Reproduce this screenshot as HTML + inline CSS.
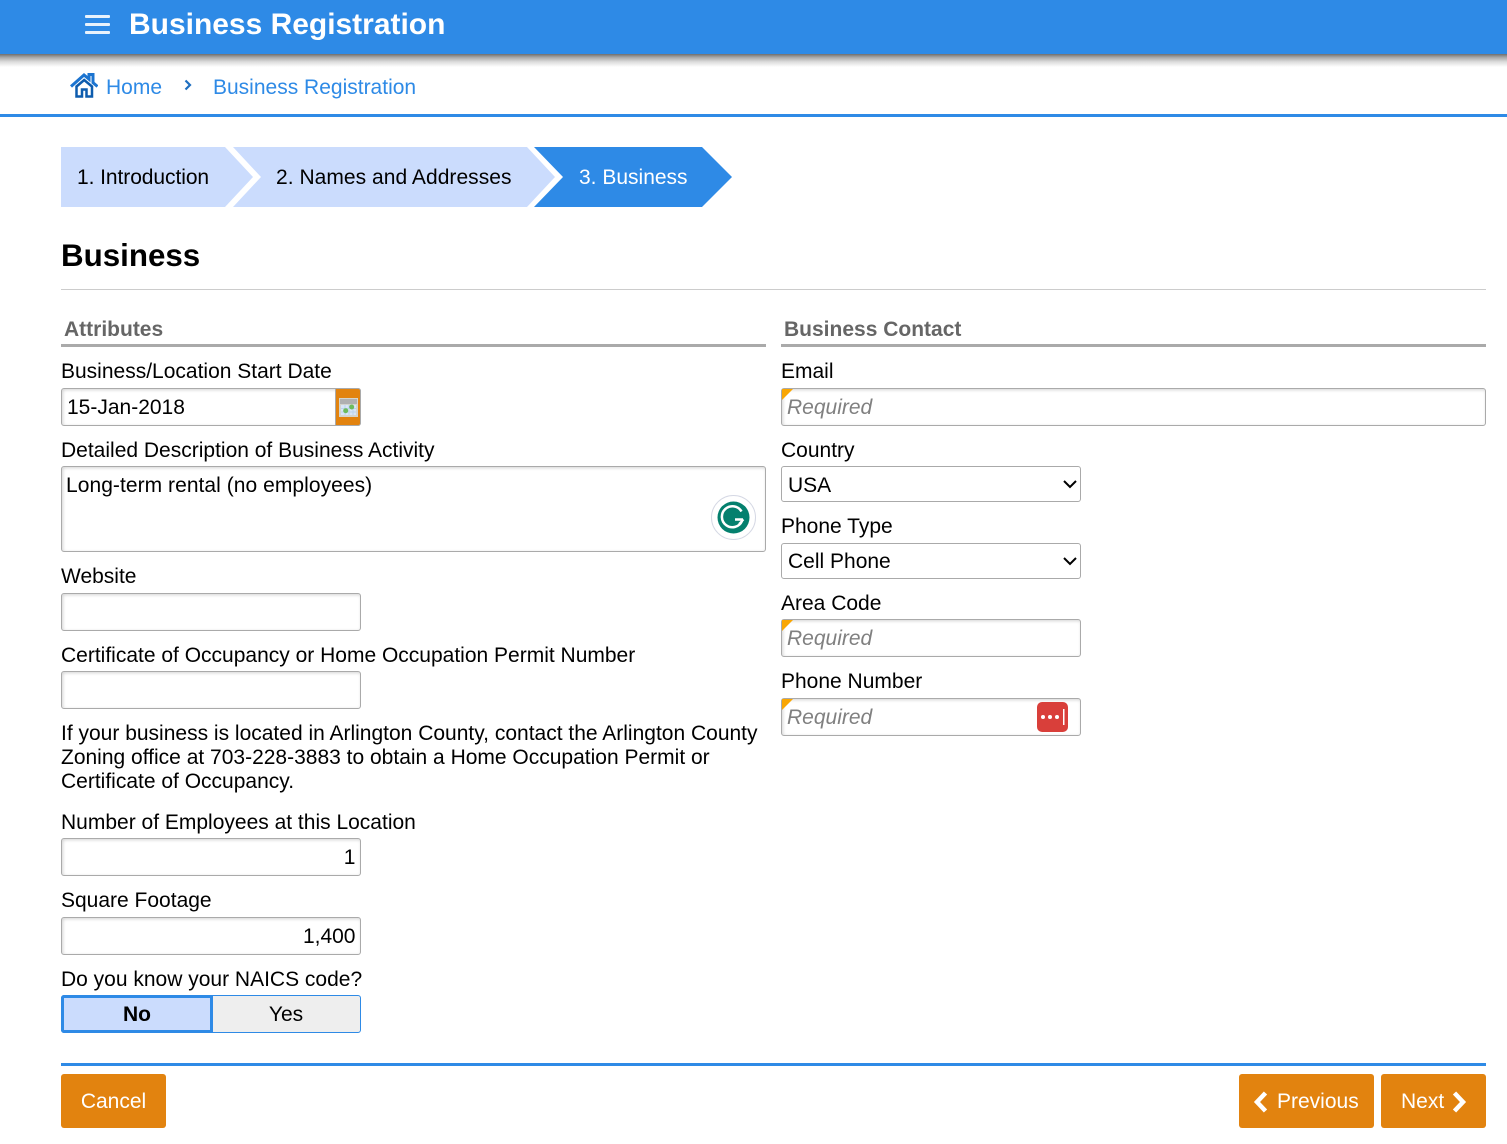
<!DOCTYPE html>
<html><head><meta charset="utf-8"><title>Business Registration</title>
<style>
html,body{margin:0;padding:0;background:#fff}
body{width:1507px;height:1144px;position:relative;overflow:hidden;font-family:"Liberation Sans",sans-serif;color:#000}
.t{position:absolute;white-space:nowrap;font-size:21px;line-height:24px;margin-top:1px}
.b{position:absolute;box-sizing:border-box;background:#fff;border:1px solid #aaa;border-radius:3px;box-shadow:inset 1px 1px 3px rgba(0,0,0,.18)}
.r:before{content:"";position:absolute;left:0;top:0;border-style:solid;border-width:11px 11px 0 0;border-color:#f9a602 transparent transparent transparent}
.ph{position:absolute;font-size:21px;line-height:24px;font-style:italic;color:#808080;left:5px;top:7px}
.sel{position:absolute;box-sizing:border-box;background:#fff;border:1px solid #aaa;border-radius:3px;width:300px;height:36px;font-size:21px;line-height:36px;padding-left:6px}
.sel svg{position:absolute;right:2px;top:12px}
.btn{position:absolute;background:#e2830f;border-radius:3px;color:#fff;font-size:21px;line-height:56px;height:54px;top:1074px}
.h{position:absolute;font-size:21px;line-height:24px;font-weight:bold;color:#666;white-space:nowrap;margin-top:1px}
.u{position:absolute;height:3px;background:#aaa;top:344px}
</style></head><body>

<div style="position:absolute;left:0;top:54px;width:1507px;height:13px;background:linear-gradient(#6e6e6e,#a6a6a6 25%,#dcdcdc 60%,#fff)"></div>
<div style="position:absolute;left:0;top:0;width:1507px;height:54px;background:#2e8ae6"></div>
<svg style="position:absolute;left:85px;top:14px" width="25" height="21"><g fill="#e8f2fc"><rect y="1" width="25" height="3" rx="1"/><rect y="9" width="25" height="3" rx="1"/><rect y="17" width="25" height="3" rx="1"/></g></svg>
<div class="t" style="left:129px;top:6px;font-size:29.980px;line-height:36px;font-weight:bold;color:#fff">Business Registration</div>

<svg style="position:absolute;left:70px;top:73px" width="28" height="25" viewBox="0 0 28 25"><path d="M1 13.500 14 2l5 4.200V1.500h4v8.200l4.500 3.800" fill="none" stroke="#1c74d0" stroke-width="3"/><path d="M6.500 13.500V23.500H12V16.500h4.500V23.500H22V13.500L14.200 7z" fill="#fff" stroke="#0d5cae" stroke-width="2.500"/></svg>
<div class="t" style="left:106px;top:75px;color:#2e8ae6">Home</div>
<svg style="position:absolute;left:184px;top:79px" width="8" height="12"><path d="M1.500 1.500 6 6l-4.500 4.500" fill="none" stroke="#1f6fc0" stroke-width="2.200"/></svg>
<div class="t" style="left:213px;top:75px;color:#2e8ae6">Business Registration</div>
<div style="position:absolute;left:0;top:114px;width:1507px;height:3px;background:#2e8ae6"></div>

<svg style="position:absolute;left:61px;top:147px" width="672" height="60">
<polygon points="0,0 164,0 192,30 164,60 0,60" fill="#cbdcfd"/>
<polygon points="172,0 466,0 494,30 466,60 172,60 200,30" fill="#cbdcfd"/>
<polygon points="473,0 641,0 671,30 641,60 473,60 502,30" fill="#2e8ae6"/>
</svg>
<div class="t" style="left:77px;top:165px;letter-spacing:-.07px">1. Introduction</div>
<div class="t" style="left:276px;top:165px;letter-spacing:.04px">2. Names and Addresses</div>
<div class="t" style="left:579px;top:165px;color:#fff">3. Business</div>

<div class="t" style="left:61px;top:237px;margin-top:0;font-size:31.300px;line-height:38px;font-weight:bold">Business</div>
<div style="position:absolute;left:61px;top:289px;width:1425px;height:1px;background:#ccc"></div>

<div class="h" style="left:64px;top:317px">Attributes</div>
<div class="u" style="left:61px;width:705px"></div>
<div class="h" style="left:784px;top:317px">Business Contact</div>
<div class="u" style="left:781px;width:705px"></div>

<div class="t" style="left:61px;top:359px">Business/Location Start Date</div>
<div class="b" style="left:61px;top:388px;width:300px;height:38px"></div>
<div class="t" style="left:67px;top:395px">15-Jan-2018</div>
<div style="position:absolute;left:335px;top:388px;width:26px;height:38px;box-sizing:border-box;background:#e2830f;border:1px solid #aaa;border-radius:0 3px 3px 0"></div>
<svg style="position:absolute;left:339px;top:398px" width="19" height="19"><rect width="19" height="19" fill="#d4d4ce"/><rect x="1" y="1" width="17" height="5" fill="#b0b0b0"/><rect x="2" y="7" width="15" height="10" fill="#d8e6f7"/><path d="M2 10.500h15M2 14h15M6 7v10M10 7v10M14 7v10" stroke="#bcd3ec" stroke-width="1"/><circle cx="6.700" cy="12.700" r="2.500" fill="#6dbb5c"/><circle cx="12.700" cy="9" r="2.500" fill="#6dbb5c"/></svg>

<div class="t" style="left:61px;top:438px">Detailed Description of Business Activity</div>
<div class="b" style="left:61px;top:466px;width:705px;height:86px"></div>
<div class="t" style="left:66px;top:473px;letter-spacing:.05px">Long-term rental (no employees)</div>
<svg style="position:absolute;left:711px;top:495px" width="45" height="45" viewBox="0 0 45 45"><circle cx="22.500" cy="22.500" r="22" fill="#fff" stroke="#d5d8e4"/><circle cx="22.500" cy="22.500" r="16" fill="#04806e"/><path d="M30.500 16.500A10.500 10.500 0 1 0 31 26" fill="none" stroke="#fff" stroke-width="2.500"/><path d="M24 24.500h8" fill="none" stroke="#fff" stroke-width="2.500"/><path d="M28 29l4.500-4.500" fill="none" stroke="#fff" stroke-width="2"/></svg>

<div class="t" style="left:61px;top:564px">Website</div>
<div class="b" style="left:61px;top:593px;width:300px;height:38px"></div>

<div class="t" style="left:61px;top:643px">Certificate of Occupancy or Home Occupation Permit Number</div>
<div class="b" style="left:61px;top:671px;width:300px;height:38px"></div>

<div class="t" style="left:61px;top:721px">If your business is located in Arlington County, contact the Arlington County</div>
<div class="t" style="left:61px;top:745px">Zoning office at 703-228-3883 to obtain a Home Occupation Permit or</div>
<div class="t" style="left:61px;top:769px">Certificate of Occupancy.</div>

<div class="t" style="left:61px;top:810px">Number of Employees at this Location</div>
<div class="b" style="left:61px;top:838px;width:300px;height:38px"></div>
<div class="t" style="right:1151.600px;top:845px">1</div>

<div class="t" style="left:61px;top:888px">Square Footage</div>
<div class="b" style="left:61px;top:917px;width:300px;height:38px"></div>
<div class="t" style="right:1151.500px;top:924px">1,400</div>

<div class="t" style="left:61px;top:967px">Do you know your NAICS code?</div>
<div style="position:absolute;left:61px;top:995px;width:300px;height:38px;box-sizing:border-box;border:1px solid #2e8ae6;border-radius:3px;background:#eee"></div>
<div style="position:absolute;left:61px;top:995px;width:152px;height:38px;box-sizing:border-box;border:3px solid #2e8ae6;border-radius:3px 0 0 3px;background:#cbdcfd;text-align:center;font-weight:bold;font-size:21px;line-height:34px">No</div>
<div class="t" style="left:212.500px;width:147px;text-align:center;top:1002px">Yes</div>

<div class="t" style="left:781px;top:359px">Email</div>
<div class="b r" style="left:781px;top:388px;width:705px;height:38px"><span class="ph">Required</span></div>

<div class="t" style="left:781px;top:438px">Country</div>
<div class="sel" style="left:781px;top:466px;line-height:37px">USA<svg width="16" height="10"><path d="M2 2l6 6 6-6" fill="none" stroke="#000" stroke-width="2"/></svg></div>
<div class="t" style="left:781px;top:514px">Phone Type</div>
<div class="sel" style="left:781px;top:543px">Cell Phone<svg width="16" height="10"><path d="M2 2l6 6 6-6" fill="none" stroke="#000" stroke-width="2"/></svg></div>
<div class="t" style="left:781px;top:591px">Area Code</div>
<div class="b r" style="left:781px;top:619px;width:300px;height:38px"><span class="ph">Required</span></div>
<div class="t" style="left:781px;top:669px">Phone Number</div>
<div class="b r" style="left:781px;top:698px;width:300px;height:38px"><span class="ph">Required</span></div>
<svg style="position:absolute;left:1037px;top:702px" width="31" height="30"><rect width="31" height="30" rx="5" fill="#d93f3a"/><g fill="#fff"><circle cx="6" cy="15" r="2"/><circle cx="13" cy="15" r="2"/><circle cx="20" cy="15" r="2"/><rect x="26" y="7" width="1.500" height="16"/></g></svg>

<div style="position:absolute;left:61px;top:1063px;width:1425px;height:3px;background:#2e8ae6"></div>
<div class="btn" style="left:61px;width:105px;text-align:center">Cancel</div>
<div class="btn" style="left:1239px;width:135px"></div>
<svg style="position:absolute;left:1253px;top:1090px" width="16" height="24"><path d="M12.500 3 4 12l8.500 9" fill="none" stroke="#fff" stroke-width="4.500"/></svg>
<div class="t" style="left:1277px;top:1089px;color:#fff">Previous</div>
<div class="btn" style="left:1381px;width:105px"></div>
<div class="t" style="left:1401px;top:1089px;color:#fff">Next</div>
<svg style="position:absolute;left:1451px;top:1090px" width="16" height="24"><path d="M3.500 3 12 12l-8.500 9" fill="none" stroke="#fff" stroke-width="4.500"/></svg>
</body></html>
